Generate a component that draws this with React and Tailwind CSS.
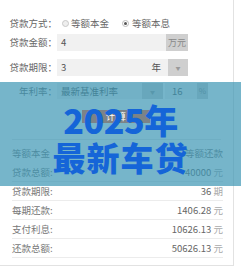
import React from 'react';

const font = { fontFamily: '"Noto Sans CJK SC", "Noto Sans", sans-serif' };

const results = [
  { label: '贷款总额:', value: '40000', unit: '元' },
  { label: '贷款期限:', value: '36', unit: '期' },
  { label: '每期还款:', value: '1406.28', unit: '元' },
  { label: '支付利息:', value: '10626.13', unit: '元' },
  { label: '还款总额:', value: '50626.13', unit: '元' },
];

const Label = ({ children }) => (
  <div className="w-[57px] shrink-0 text-right text-[9.5px] text-[#666]">{children}</div>
);

const Caret = () => <span className="text-[5px] text-[#999] leading-none">▼</span>;

export default function App() {
  return (
    <div className="relative w-[241px] h-[270px] overflow-hidden bg-white" style={font}>
      <div className="w-[234px] border-r border-b border-[#e2e2e2] pt-[15px] pb-[7px]">
        {/* 贷款方式 */}
        <div className="flex items-center h-[16px]">
          <Label>贷款方式：</Label>
          <span className="ml-[5px] w-[7px] h-[7px] rounded-full border border-[#c8c8c8] bg-[#eee]" />
          <span className="ml-[2px] text-[9.5px] text-[#666]">等额本金</span>
          <span className="ml-[13px] w-[7px] h-[7px] rounded-full border border-[#bbb] bg-white flex items-center justify-center">
            <span className="w-[3px] h-[3px] rounded-full bg-[#555]" />
          </span>
          <span className="ml-[3px] text-[9.5px] text-[#666]">等额本息</span>
        </div>

        {/* 贷款金额 */}
        <div className="flex items-center h-[17px] mt-[3px]">
          <Label>贷款金额：</Label>
          <div className="flex w-[131px] h-full">
            <div className="flex-1 bg-[#f1f1f1] pl-[4px] flex items-center text-[9.5px] text-[#555]">4</div>
            <div className="w-[22px] bg-[#cfcfcf] flex items-center justify-center text-[9px] text-[#888]">万元</div>
          </div>
        </div>

        {/* 贷款期限 */}
        <div className="flex items-center h-[17px] mt-[8px]">
          <Label>贷款期限：</Label>
          <div className="flex w-[131px] h-full">
            <div className="flex-1 bg-[#f1f1f1] pl-[4px] pr-[7px] flex items-center justify-between text-[9.5px] text-[#555]">
              <span>3</span>
              <span>年</span>
            </div>
            <div className="w-[20px] bg-[#cfcfcf] flex items-center justify-center">
              <Caret />
            </div>
          </div>
        </div>

        {/* 年利率 */}
        <div className="flex items-center h-[16px] mt-[7px]">
          <Label>年利率：</Label>
          <div className="flex h-full">
            <div className="w-[85px] bg-[#f1f1f1] pl-[4px] flex items-center text-[9.5px] text-[#555]">最新基准利率</div>
            <div className="w-[21px] bg-[#cfcfcf] flex items-center justify-center">
              <Caret />
            </div>
            <div className="ml-[2px] w-[32px] bg-[#f1f1f1] pl-[7px] flex items-center text-[9.5px] text-[#555]">16</div>
            <div className="w-[11px] bg-[#cfcfcf] flex items-center justify-center text-[8px] text-[#888]">%</div>
          </div>
        </div>

        {/* 计算 */}
        <div className="flex mt-[11px] pl-[82px]">
          <button className="relative z-10 w-[68px] h-[13px] bg-[#7c8387] text-white text-[9px] leading-none">计 算</button>
        </div>

        <div className="mx-[12px] mt-[16px] border-t border-[#e6e6e6]" />

        <div className="mx-[12px] mr-[10px] mt-[4px] h-[19px] flex items-center justify-between text-[9.5px] text-[#777]">
          <span>等额本金</span>
          <span>等额还款</span>
        </div>

        <div className="mx-[12px] mr-[10px]">
          {results.map((r) => (
            <div key={r.label} className="h-[19px] border-b border-[#ececec] flex items-center justify-between text-[9.5px]">
              <span className="text-[#777]">{r.label}</span>
              <span className="text-[#666]">
                {r.value} <span className="text-[#aaa]">{r.unit}</span>
              </span>
            </div>
          ))}
        </div>
      </div>

      {/* 覆盖横幅 */}
      <div className="absolute left-0 top-[82px] w-[241px] h-[104px] bg-[rgba(60,150,180,0.7)] flex flex-col items-center">
        <div className="relative z-20 mt-[21px] h-[34px] flex items-center text-[34px] font-black text-[#1565d8] leading-none tracking-[-0.5px]">
          2025年
        </div>
        <div className="relative z-20 mt-[3px] h-[34px] flex items-center text-[33px] font-black text-[#1565d8] leading-none tracking-[1px]">
          最新车贷
        </div>
      </div>
    </div>
  );
}
